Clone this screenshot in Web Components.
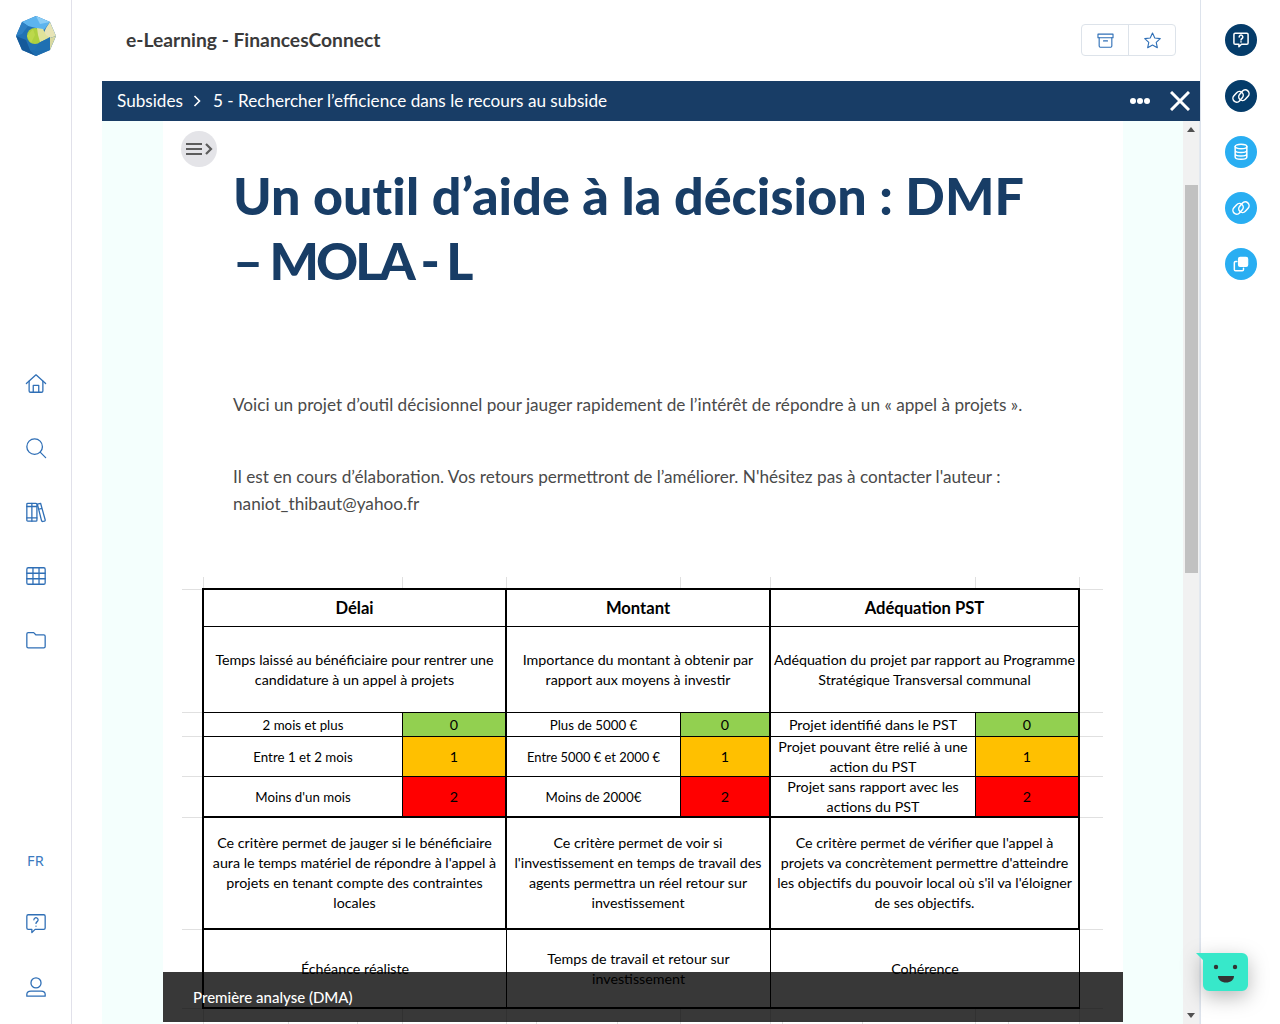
<!DOCTYPE html>
<html lang="fr"><head><meta charset="utf-8"><title>e-Learning - FinancesConnect</title>
<style>
html,body{margin:0;height:100%;overflow:hidden;background:#fff;font-family:Lato,"Noto Sans",sans-serif}
</style></head><body>
<app-shell>
  <side-rail slot="left"></side-rail>
  <main-pane slot="main">
    <top-bar slot="top" title-text="e-Learning - FinancesConnect"></top-bar>
    <crumb-bar slot="crumb"></crumb-bar>
    <content-scroller slot="body">
      <lesson-article>
        <h1 slot="title"><span style="letter-spacing:.08px">Un outil d’aide à la décision : DMF</span><br><span style="letter-spacing:-3px">– MOLA - L</span></h1>
        <p-text>Voici un projet d’outil décisionnel pour jauger rapidement de l’intérêt de répondre à un « appel à projets ».</p-text>
        <p-text class="second">Il est en cours d’élaboration. Vos retours permettront de l’améliorer. N'hésitez pas à contacter l'auteur :<br>naniot_thibaut@yahoo.fr</p-text>
        <score-sheet></score-sheet>
      </lesson-article>
    </content-scroller>
  </main-pane>
  <tool-rail slot="right"></tool-rail>
</app-shell>
<chat-bubble></chat-bubble>
<script>
const svg=(vb,body,extra='')=>`<svg viewBox="0 0 ${vb} ${vb}" width="100%" height="100%" fill="none" stroke="currentColor" stroke-width="1.4" stroke-linecap="round" stroke-linejoin="round" ${extra}>${body}</svg>`;
const ICONS={
 home:svg(24,'<path d="M1.500 11.500 12 2l10.500 9.500"/><path d="M4.500 9v10.500A1.500 1.500 0 0 0 6 21h12a1.500 1.500 0 0 0 1.500-1.500V9"/><path d="M9 21v-7.500h6V21"/>'),
 search:svg(24,'<circle cx="10.500" cy="10.500" r="8.500"/><path d="M16.500 16.500 22.500 22.500"/>'),
 books:svg(24,'<rect x="2" y="2.500" width="11" height="19.500" rx="1"/><path d="M7.500 2.500V22M2 6h11M2 18.500h11"/><path d="M13.500 3.500 17 2.500l5 18c.2.800-.1 1.200-.8 1.400l-1.800.4c-.7.200-1.100-.1-1.300-.7zM15 9l3.500-1"/>'),
 grid:svg(24,'<rect x="2" y="3" width="20" height="18" rx="1.500"/><path d="M8.700 3v18M15.300 3v18M2 9h20M2 15h20"/>'),
 folder:svg(24,'<path d="M2 5.500A1.500 1.500 0 0 1 3.500 4h6l2.500 2.500h8.500A1.500 1.500 0 0 1 22 8v11a1.500 1.500 0 0 1-1.500 1.500h-17A1.500 1.500 0 0 1 2 19z"/>'),
 help:svg(24,'<path d="M3.500 3h17A1.500 1.500 0 0 1 22 4.500v13a1.500 1.500 0 0 1-1.500 1.500H11l-3.500 3.500V19h-4A1.500 1.500 0 0 1 2 17.500v-13A1.500 1.500 0 0 1 3.500 3z"/><path d="M9.700 8.500a2.300 2.300 0 1 1 3.600 2c-.9.600-1.300 1-1.300 2"/><path d="M12 15.300v.2"/>'),
 user:svg(24,'<circle cx="12" cy="7.500" r="5.500"/><path d="M2 22v-2c0-2.200 2.200-3.500 4.500-3.500h11c2.300 0 4.500 1.300 4.500 3.500v2z"/>'),
 archive:svg(24,'<path d="M2.500 4h19v4.500h-19z"/><path d="M4 8.500V19a1.500 1.500 0 0 0 1.500 1.500h13A1.500 1.500 0 0 0 20 19V8.500M9.500 12.500h5"/>'),
 star:svg(24,'<path d="M12 2.500l2.900 6.300 6.900.8-5.100 4.700 1.400 6.800-6.100-3.400-6.100 3.400 1.400-6.800-5.100-4.700 6.900-.8z"/>'),
 chat:svg(24,'<path d="M5 4h14A1.500 1.500 0 0 1 20.500 5.500v10a1.500 1.500 0 0 1-1.500 1.500H12.500L9.500 20v-3H5a1.500 1.500 0 0 1-1.500-1.500v-10A1.500 1.500 0 0 1 5 4z" stroke-width="1.800"/><path d="M9.800 8.300a2.200 2.200 0 1 1 3.400 1.900c-.8.500-1.200.9-1.200 1.700M12 14.200v.1" stroke-width="1.800"/>'),
 link:svg(24,'<rect x="1.500" y="8.500" width="14" height="9" rx="4.500" transform="rotate(-48 8.500 13)" stroke-width="1.800"/><rect x="8.500" y="6.500" width="14" height="9" rx="4.500" transform="rotate(-48 15.500 11)" stroke-width="1.800"/>'),
 db:svg(24,'<ellipse cx="12" cy="5.500" rx="7" ry="2.700" stroke-width="1.800"/><path d="M5 5.500v12.500c0 1.500 3.100 2.700 7 2.700s7-1.200 7-2.700V5.500M5 10c0 1.500 3.100 2.700 7 2.700s7-1.200 7-2.700M5 14c0 1.500 3.100 2.700 7 2.700s7-1.200 7-2.700" stroke-width="1.800"/>'),
 copy:svg(24,'<rect x="9" y="4" width="11" height="11" rx="2" fill="#fff" stroke="#fff"/><path d="M7 9H5.500A1.500 1.500 0 0 0 4 10.500v8A1.500 1.500 0 0 0 5.500 20h8a1.500 1.500 0 0 0 1.500-1.500V17" stroke-width="1.800"/>')
};
function def(name,css,html,extra){
 customElements.define(name,class extends HTMLElement{
  constructor(){super();const r=this.attachShadow({mode:'open'});r.innerHTML=`<style>${css}</style>${typeof html==='function'?html(this):html}`;}
  connectedCallback(){extra&&extra(this)}
 });
}
def('ui-icon',`:host{display:block;width:var(--s,22px);height:var(--s,22px);color:inherit}`,'',el=>{el.shadowRoot.innerHTML+=ICONS[el.getAttribute('name')]});

def('app-shell',`:host{display:flex;height:1024px;width:1280px;overflow:hidden}
 ::slotted([slot=main]){flex:1;min-width:0}`,
 `<slot name="left"></slot><slot name="main"></slot><slot name="right"></slot>`);

def('side-rail',`:host{display:grid;grid-template-rows:1fr auto 1fr;width:72px;flex:none;box-sizing:border-box;border-right:1px solid #e1e1ea;height:1024px;color:#2f6fb6}
 .logo{width:40px;height:40px;margin:16px 0 0 16px}
 nav,.bot{display:flex;flex-direction:column;align-items:center}
 .it{height:64px;display:flex;align-items:center;justify-content:center;width:71px}
 .bot{align-self:end;padding-bottom:5px}
 .fr{height:62px;font-size:14.500px;letter-spacing:.2px;color:#3b7abf;font-family:"Noto Sans",sans-serif}
 ui-icon{--s:22px}`,
 `<div><svg class="logo" viewBox="0 0 40 40">
   <polygon points="20,0 34,6 40,20 34,34 20,40 6,34 0,20 6,6" fill="#2272b4"/>
   <polygon points="20,0 34,6 28,14 12,10 6,6" fill="#5db4ee"/>
   <polygon points="20,0 34,6 24,8" fill="#8ccdf5"/>
   <polygon points="6,6 12,10 6,18 0,20" fill="#2e80c4"/>
   <polygon points="0,20 10,24 14,34 20,40 6,34" fill="#155a9a"/>
   <polygon points="14,34 34,34 20,40" fill="#1d6cae"/>
   <polygon points="34,6 40,20 34,22 27,19 30,12" fill="#e7e4b6"/>
   <polygon points="34,22 40,20 34,34 34,22" fill="#d9d9a0"/>
   <circle cx="19" cy="20" r="8" fill="#aed03f"/>
   <polygon points="21,12 27,13 30,19 34,22 24,26 22,19" fill="#dfe39a"/>
   <polygon points="23,27 34,21 34,34 18,35" fill="#1f70b2"/>
   <polygon points="11,20 17,13 19,19 15,27" fill="#bcd84b"/>
  </svg></div>
  <nav>
   <div class="it"><ui-icon name="home"></ui-icon></div>
   <div class="it"><ui-icon name="search"></ui-icon></div>
   <div class="it"><ui-icon name="books"></ui-icon></div>
   <div class="it"><ui-icon name="grid"></ui-icon></div>
   <div class="it"><ui-icon name="folder"></ui-icon></div>
  </nav>
  <div class="bot">
   <div class="it fr">FR</div>
   <div class="it"><ui-icon name="help"></ui-icon></div>
   <div class="it"><ui-icon name="user"></ui-icon></div>
  </div>`);

def('main-pane',`:host{display:flex;flex-direction:column;height:1024px;padding-left:30px;box-sizing:border-box;min-width:0}
 ::slotted([slot=body]){flex:1;min-height:0}`,
 `<slot name="top"></slot><slot name="crumb"></slot><slot name="body"></slot>`);

def('top-bar',`:host{display:flex;align-items:center;justify-content:space-between;height:81px;padding:0 24px 1px;flex:none;box-sizing:border-box}
 .t{font:700 19.250px/1 Lato,sans-serif;color:#3a3a3a}
 .g{display:flex;width:95px;height:32px;box-sizing:border-box;border:1px solid #dde3ea;border-radius:4px;color:#2f6fb6}
 .g div{flex:1;display:flex;align-items:center;justify-content:center}
 .g div+div{border-left:1px solid #dde3ea}
 ui-icon{--s:19px}`,
 el=>`<div class="t">${el.getAttribute('title-text')}</div><div class="g"><div><ui-icon name="archive"></ui-icon></div><div><ui-icon name="star"></ui-icon></div></div>`);

def('crumb-bar',`:host{display:flex;align-items:center;height:40px;background:#183d66;color:#fff;padding:0 10px 0 15px;font:400 17.150px/1 Lato,sans-serif;flex:none;box-sizing:border-box}
 svg.ch{width:8px;height:12px;margin:0 12px 0 10px}
 .sp{flex:1}
 .d{display:flex;gap:1px;margin-right:20px}.d i{width:6px;height:6px;border-radius:50%;background:#fff}
 svg.x{width:20px;height:20px}`,
 `<span>Subsides</span><svg class="ch" viewBox="0 0 8 12" fill="none" stroke="#fff" stroke-width="1.600"><path d="M1.500 1 6.500 6l-5 5"/></svg><span>5 - Rechercher l’efficience dans le recours au subside</span><span class="sp"></span><div class="d"><i></i><i></i><i></i></div><svg class="x" viewBox="0 0 20 20" stroke="#fff" stroke-width="3"><path d="M1 1 19 19M19 1 1 19"/></svg>`);

def('content-scroller',`:host{display:flex;background:#f4fffd;overflow:hidden;min-height:0}
 .col{flex:none;width:960px;margin-left:61px;background:#fff;position:relative;overflow:hidden;height:903px}
 .gap{flex:1}
 .sb{flex:none;width:16px;background:#f1f1f1;display:flex;flex-direction:column;border-right:1px solid #e3e8ef}
 .ar{height:17px;display:flex;align-items:center;justify-content:center}
 .ar svg{width:8px;height:5px;fill:#505050}
 .tr{flex:1;padding:47px 1px 0 2px}
 .th{height:388px;background:#c1c1c1}
 .bar{position:absolute;left:0;right:0;bottom:2px;height:50px;background:rgba(0,0,0,.78);color:#fff;font:500 15px/1 Lato,sans-serif;display:flex;align-items:center;padding-left:30px}`,
 `<div class="col"><slot></slot><div class="bar">Première analyse (DMA)</div></div><div class="gap"></div>
  <div class="sb"><div class="ar"><svg viewBox="0 0 8 5"><path d="M4 0 8 5H0z"/></svg></div><div class="tr"><div class="th"></div></div><div class="ar"><svg viewBox="0 0 8 5"><path d="M0 0h8L4 5z"/></svg></div></div>`);

def('lesson-article',`:host{display:block;padding:42px 0 0 0;position:relative}
 .tg{position:absolute;left:18px;top:10px;width:36px;height:36px;border-radius:50%;background:#e4e4e8;display:flex;align-items:center;justify-content:center}
 .tg svg{width:28px;height:16px}
 ::slotted(h1){margin:0 0 98px 70px;font:900 52px/65px Lato,sans-serif;font-variant-ligatures:none;color:#183d66;white-space:nowrap}
 .rest{display:block}`,
 `<div class="tg"><svg viewBox="0 0 28 16" fill="none" stroke="#5c5c5c" stroke-width="2.200"><path d="M1 3h16M1 8h16M1 13h16M21 3l5 5-5 5"/></svg></div><slot name="title"></slot><div class="rest"><slot></slot></div>`);

def('p-text',`:host{display:block;margin:0 0 0 70px;font:400 17.200px/27px Lato,sans-serif;color:#4a4a4a;white-space:nowrap}
 :host(.second){margin-top:45px}`,`<slot></slot>`);

const T='#e0e0e0';
const ticksA=[21,220,324,498,588,793,897];
const ticksB=[106,175,354,435,600,680,826];
def('score-sheet',`:host{display:grid;margin:60px 0 0 19px;width:921px;
 grid-template-columns:20px 201px 104px 174px 90px 205px 104px 23px;
 grid-template-rows:11px 39px 86px 24px 40px 41px 112px 79px 20px;
 font:400 14.280px/20px Lato,sans-serif;color:#000}
 .c{box-sizing:border-box;display:flex;align-items:center;justify-content:center;text-align:center;white-space:nowrap;border-right:1px solid #000;border-bottom:1px solid #000}
 .l{border-left:2px solid #000}
 .R{border-right-width:2px}
 .B{border-bottom-width:2px}
 .T{border-top:2px solid #000}
 .h{font-weight:700;font-size:16.600px}
 .n{font-size:13.300px}
 .m{font-size:12.900px}
 .s2{grid-column:span 2}
 .g{background:#92d050}.a{background:#ffc000}.r{background:#f00}
 .gu{box-sizing:border-box;border-bottom:1px solid ${T}}
 .gu.first{border-bottom:0;background:linear-gradient(${T},${T}) 0 1px/100% 1px no-repeat}
 .top{grid-column:1/-1;position:relative;background:
   ${ticksA.map(x=>`linear-gradient(${T},${T}) ${x}px 0/1px 100% no-repeat`).join(',')}}
 .btm{grid-column:1/-1;background:${ticksA.map(x=>`linear-gradient(${T},${T}) ${x}px 0/1px 100% no-repeat`).concat(ticksB.map(x=>`linear-gradient(${T},${T}) ${x}px 12px/1px 100% no-repeat`)).join(',')}}`,
 ()=>{
  const g=(f='')=>`<div class="gu ${f}"></div>`;
  return `<div class="top"></div>`+
  g('first')+`<div class="c s2 l T h R">Délai</div><div class="c s2 T h R">Montant</div><div class="c s2 T h R">Adéquation PST</div>`+g('first')+
  g()+`<div class="c s2 l R">Temps laissé au bénéficiaire pour rentrer une<br>candidature à un appel à projets</div><div class="c s2 R">Importance du montant à obtenir par<br>rapport aux moyens à investir</div><div class="c s2 R">Adéquation du projet par rapport au Programme<br>Stratégique Transversal communal</div>`+g()+
  g()+`<div class="c l n">2 mois et plus</div><div class="c R g">0</div><div class="c n">Plus de 5000 €</div><div class="c R g">0</div><div class="c">Projet identifié dans le PST</div><div class="c R g">0</div>`+g()+
  g()+`<div class="c l n">Entre 1 et 2 mois</div><div class="c R a">1</div><div class="c m">Entre 5000 € et 2000 €</div><div class="c R a">1</div><div class="c">Projet pouvant être relié à une<br>action du PST</div><div class="c R a">1</div>`+g()+
  g()+`<div class="c l B n">Moins d'un mois</div><div class="c R B r">2</div><div class="c B n">Moins de 2000€</div><div class="c R B r">2</div><div class="c B">Projet sans rapport avec les<br>actions du PST</div><div class="c R B r">2</div>`+g()+
  g()+`<div class="c s2 l R B">Ce critère permet de jauger si le bénéficiaire<br>aura le temps matériel de répondre à l'appel à<br>projets en tenant compte des contraintes<br>locales</div><div class="c s2 R B">Ce critère permet de voir si<br>l'investissement en temps de travail des<br>agents permettra un réel retour sur<br>investissement</div><div class="c s2 R B">Ce critère permet de vérifier que l'appel à<br>projets va concrètement permettre d'atteindre<br>les objectifs du pouvoir local où s'il va l'éloigner<br>de ses objectifs.</div>`+g()+
  g()+`<div class="c s2 l B">Échéance réaliste</div><div class="c s2 B">Temps de travail et retour sur<br>investissement</div><div class="c s2 B">Cohérence</div>`+g()+
  `<div class="btm"></div>`;
 });

def('tool-rail',`:host{display:flex;flex-direction:column;gap:24px;flex:none;padding:24px 0 0 24px;box-sizing:border-box;border-left:1px solid #dde3ec;height:1024px;width:80px}
 .b{width:32px;height:32px;border-radius:50%;display:flex;align-items:center;justify-content:center;color:#fff;background:#29aef2}
 .d{background:#053c6a}
 ui-icon{--s:20px}`,
 `<div class="b d"><ui-icon name="chat"></ui-icon></div><div class="b d"><ui-icon name="link"></ui-icon></div><div class="b"><ui-icon name="db"></ui-icon></div><div class="b"><ui-icon name="link"></ui-icon></div><div class="b"><ui-icon name="copy"></ui-icon></div>`);

def('chat-bubble',`:host{position:fixed;left:1196px;top:953px;width:52px;height:38px;display:block;filter:drop-shadow(0 6px 10px rgba(0,0,0,.28))}
 svg{display:block}`,
 `<svg width="52" height="38" viewBox="0 0 52 38"><path d="M0 0H46a6 6 0 0 1 6 6V32a6 6 0 0 1-6 6H13a6 6 0 0 1-6-6V7z" fill="#37e8ca"/><circle cx="20" cy="14" r="2.200" fill="#333"/><circle cx="39" cy="14" r="2.200" fill="#333"/><path d="M22 23H38c0 4-3.500 6.500-8 6.500S22 27 22 23z" fill="#333"/></svg>`);
</script>
</body></html>
